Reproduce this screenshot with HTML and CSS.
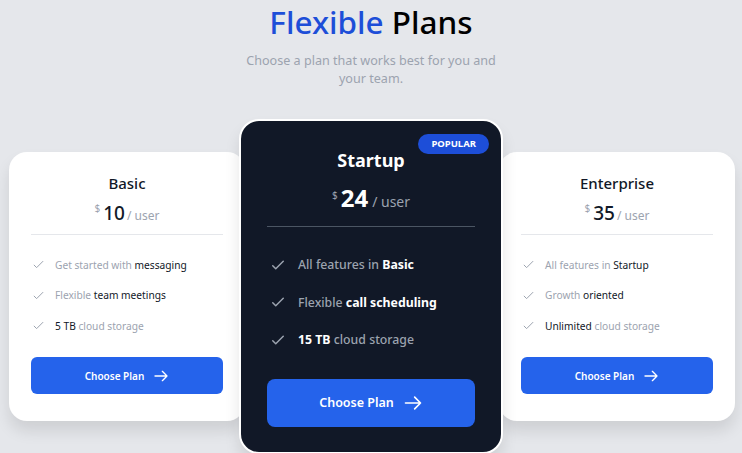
FILE: index.html
```html
<!DOCTYPE html>
<html lang="en">
<head>
    <meta charset="UTF-8">
    <meta name="viewport" content="width=device-width, initial-scale=1.0">
    <title>Flexible Plans</title>
    <link rel="stylesheet" href="styles.css">
</head>
<body>
    <div class="page">
        <h1 class="title"><span class="accent">Flexible</span> Plans</h1>
        <p class="subtitle">Choose a plan that works best for you and your team.</p>

        <div class="plans">
            <div class="card">
                <h3 class="plan-name">Basic</h3>
                <div class="price"><sup>$</sup><span class="amount">10</span><span class="per">/ user</span></div>
                <ul class="features">
                    <li><svg class="check" viewBox="0 0 24 24"><path d="M5 13l4 4L19 7"/></svg><span><span class="muted">Get started with</span> messaging</span></li>
                    <li><svg class="check" viewBox="0 0 24 24"><path d="M5 13l4 4L19 7"/></svg><span><span class="muted">Flexible</span> team meetings</span></li>
                    <li><svg class="check" viewBox="0 0 24 24"><path d="M5 13l4 4L19 7"/></svg><span>5 TB <span class="muted">cloud storage</span></span></li>
                </ul>
                <button class="btn">Choose Plan <svg class="arrow" viewBox="0 0 24 24"><path d="M14 5l7 7m0 0l-7 7m7-7H3"/></svg></button>
            </div>

            <div class="card featured">
                <span class="badge">POPULAR</span>
                <h3 class="plan-name">Startup</h3>
                <div class="price"><sup>$</sup><span class="amount">24</span><span class="per">/ user</span></div>
                <ul class="features">
                    <li><svg class="check" viewBox="0 0 24 24"><path d="M5 13l4 4L19 7"/></svg><span><span class="muted">All features in</span> <b>Basic</b></span></li>
                    <li><svg class="check" viewBox="0 0 24 24"><path d="M5 13l4 4L19 7"/></svg><span><span class="muted">Flexible</span> <b>call scheduling</b></span></li>
                    <li><svg class="check" viewBox="0 0 24 24"><path d="M5 13l4 4L19 7"/></svg><span><b>15 TB</b> <span class="muted">cloud storage</span></span></li>
                </ul>
                <button class="btn">Choose Plan <svg class="arrow" viewBox="0 0 24 24"><path d="M14 5l7 7m0 0l-7 7m7-7H3"/></svg></button>
            </div>

            <div class="card">
                <h3 class="plan-name">Enterprise</h3>
                <div class="price"><sup>$</sup><span class="amount">35</span><span class="per">/ user</span></div>
                <ul class="features">
                    <li><svg class="check" viewBox="0 0 24 24"><path d="M5 13l4 4L19 7"/></svg><span><span class="muted">All features in</span> Startup</span></li>
                    <li><svg class="check" viewBox="0 0 24 24"><path d="M5 13l4 4L19 7"/></svg><span><span class="muted">Growth</span> oriented</span></li>
                    <li><svg class="check" viewBox="0 0 24 24"><path d="M5 13l4 4L19 7"/></svg><span>Unlimited <span class="muted">cloud storage</span></span></li>
                </ul>
                <button class="btn">Choose Plan <svg class="arrow" viewBox="0 0 24 24"><path d="M14 5l7 7m0 0l-7 7m7-7H3"/></svg></button>
            </div>
        </div>
    </div>
</body>
</html>
```

FILE: styles.css
```css
body {
    margin: 0;
    background-color: #e5e7eb;
    font-family: "Noto Sans", "Open Sans", sans-serif;
    color: #111827;
    overflow: hidden;
}
.page {
    padding-top: 2px;
    text-align: center;
}
.title {
    margin: 0;
    font-size: 31.5px;
    font-weight: 500;
    line-height: 40px;
    color: #000;
}
.accent {
    color: #1d4ed8;
}
.subtitle {
    width: 262px;
    margin: 10px auto 0;
    font-size: 12.6px;
    line-height: 18px;
    color: #9ca3af;
}
.plans {
    display: flex;
    align-items: center;
    margin-top: 31px;
    padding-left: 9px;
}
.card {
    flex-shrink: 0;
    width: 236px;
    box-sizing: border-box;
    padding: 21px 22px 27px;
    background: white;
    border-radius: 18px;
    box-shadow: 0px 10px 15px rgba(0, 0, 0, 0.1);
}
.plan-name {
    margin: 0;
    font-size: 15px;
    font-weight: 500;
    line-height: 20px;
}
.price {
    margin-top: 1px;
    padding-bottom: 4px;
    border-bottom: 1px solid #e5e7eb;
    line-height: 28px;
}
.price sup {
    font-size: 10px;
    color: #9ca3af;
    vertical-align: 8px;
    margin-right: 3px;
}
.amount {
    font-size: 19px;
    font-weight: 500;
}
.per {
    margin-left: 2px;
    font-size: 12px;
    color: #9ca3af;
}
.features {
    list-style: none;
    margin: 0;
    padding: 15px 0 0;
    text-align: left;
}
.features li {
    display: flex;
    align-items: center;
    height: 30.5px;
    font-size: 10.2px;
}
.muted {
    color: #9ca3af;
}
.check {
    width: 15px;
    height: 15px;
    margin: 0 9px 0 0;
    fill: none;
    stroke: #9ca3af;
    stroke-width: 1.6;
    stroke-linecap: round;
    stroke-linejoin: round;
}
.btn {
    display: flex;
    align-items: center;
    justify-content: center;
    width: 100%;
    height: 37px;
    margin-top: 16px;
    background: #2563eb;
    color: white;
    border: none;
    border-radius: 6px;
    font-family: inherit;
    font-size: 10px;
    font-weight: 600;
    cursor: pointer;
}
.arrow {
    width: 16px;
    height: 16px;
    margin-left: 9px;
    fill: none;
    stroke: white;
    stroke-width: 2;
    stroke-linecap: round;
    stroke-linejoin: round;
}
.featured {
    position: relative;
    z-index: 1;
    width: 264px;
    margin: 0 -4px 0 -6px;
    padding: 26px 26px 25px;
    background: #111827;
    border: 2px solid white;
    border-radius: 20px;
    color: white;
}
.badge {
    position: absolute;
    top: 13px;
    right: 12px;
    padding: 3px 13px;
    background: #1d4ed8;
    border-radius: 10px;
    font-size: 9.5px;
    font-weight: 700;
    line-height: 14px;
}
.featured .plan-name {
    font-size: 18px;
    font-weight: 700;
    line-height: 26px;
}
.featured .price {
    margin-top: 4px;
    padding-bottom: 6px;
    border-bottom-color: #4b5563;
    line-height: 36px;
}
.featured .amount {
    font-size: 24px;
    font-weight: 700;
}
.featured .per {
    margin-left: 4px;
    font-size: 14px;
}
.featured .features {
    padding-top: 19px;
}
.featured .features li {
    height: 37.5px;
    font-size: 12.3px;
    font-weight: 500;
}
.featured .check {
    width: 18px;
    height: 18px;
    margin: 0 11px 0 2px;
    stroke-width: 2;
}
.featured .btn {
    height: 48px;
    margin-top: 20px;
    border-radius: 8px;
    font-size: 12.5px;
}
.featured .arrow {
    width: 20px;
    height: 20px;
}
```
